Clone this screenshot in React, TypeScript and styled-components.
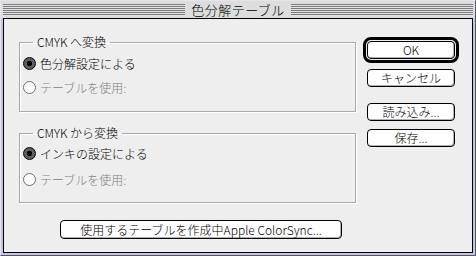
import React from "react";
import styled, { createGlobalStyle } from "styled-components";

const GlobalStyle = createGlobalStyle`
  html, body {
    margin: 0;
    padding: 0;
    background: #ffffff;
  }
  body {
    font-family: "Noto Sans CJK JP", "Liberation Sans", sans-serif;
    font-size: 12px;
    color: #000;
  }
`;

type RadioProps = {
  checked?: boolean;
  disabled?: boolean;
};

type ListProps = {
  gap: number;
  top: number;
};

const options = [
  {
    id: 1,
    title: "CMYK へ変換",
    gap: 8,
    top: 6,
    items: [
      { label: "色分解設定による", checked: true, disabled: false },
      { label: "テーブルを使用:", checked: false, disabled: true },
    ],
  },
  {
    id: 2,
    title: "CMYK から変換",
    gap: 10,
    top: 5,
    items: [
      { label: "インキの設定による", checked: true, disabled: false },
      { label: "テーブルを使用:", checked: false, disabled: true },
    ],
  },
];

const App: React.FC = () => {
  return (
    <>
      <GlobalStyle />
      <Window>
        <TitleBar>
          <Stripes />
          <Title>色分解テーブル</Title>
          <Stripes />
        </TitleBar>
        <Content>
          <LeftColumn>
            {options.map((group) => (
              <Group key={group.id}>
                <Legend>{group.title}</Legend>
                <RadioList gap={group.gap} top={group.top}>
                  {group.items.map((item) => (
                    <RadioRow key={item.label} disabled={item.disabled}>
                      <Radio checked={item.checked} disabled={item.disabled} />
                      {item.label}
                    </RadioRow>
                  ))}
                </RadioList>
              </Group>
            ))}
            <WideButton>使用するテーブルを作成中Apple ColorSync...</WideButton>
          </LeftColumn>
          <RightColumn>
            <DefaultRing>
              <Button>OK</Button>
            </DefaultRing>
            <Button>キャンセル</Button>
            <Spacer />
            <Button>読み込み...</Button>
            <Button>保存...</Button>
          </RightColumn>
        </Content>
      </Window>
    </>
  );
};

const Window = styled.div`
  width: 476px;
  height: 256px;
  box-sizing: border-box;
  display: flex;
  flex-direction: column;
  background: #c6c6dc;
  border-top: 1px solid #e4e4f0;
  border-left: 1px solid #e4e4f0;
  border-right: 1px solid #55556a;
  border-bottom: 1px solid #55556a;
  padding: 0 2px 2px 2px;
`;

const TitleBar = styled.div`
  height: 17px;
  display: flex;
  align-items: center;
  background: #dddddd;
  margin: 0 -2px;
  padding: 0 2px;
`;

const Stripes = styled.div`
  flex: 1;
  height: 12px;
  background: repeating-linear-gradient(
    to bottom,
    #7a7a7a 0px,
    #7a7a7a 1px,
    #e4e4e4 1px,
    #e4e4e4 2px
  );
`;

const Title = styled.div`
  padding: 0 6px;
  font-size: 13px;
  font-weight: 300;
  line-height: 17px;
  letter-spacing: 0.5px;
`;

const Content = styled.div`
  flex: 1;
  display: flex;
  background: #eeeeee;
  border: 1px solid #000;
  padding: 16px 0 0 15px;
`;

const LeftColumn = styled.div`
  width: 337px;
  display: flex;
  flex-direction: column;
`;

const Group = styled.fieldset`
  margin: 0 0 14px 0;
  padding: 0 0 0 3px;
  height: 77px;
  box-sizing: border-box;
  border: 1px solid #a8a8a8;
  box-shadow: 1px 1px 0 #ffffff, inset 1px 1px 0 #ffffff;
`;

const Legend = styled.legend`
  margin-left: 10px;
  padding: 0 4px;
  line-height: 14px;
  font-size: 12px;
  font-weight: 300;
`;

const RadioList = styled.div<ListProps>`
  display: flex;
  flex-direction: column;
  padding-top: ${(props) => props.top}px;
  gap: ${(props) => props.gap}px;
`;

const RadioRow = styled.div<RadioProps>`
  display: flex;
  align-items: center;
  gap: 4px;
  height: 16px;
  font-size: 12px;
  font-weight: 300;
  color: ${(props) => (props.disabled ? "#808080" : "#000")};
`;

const Radio = styled.span<RadioProps>`
  width: 13px;
  height: 13px;
  box-sizing: border-box;
  border-radius: 50%;
  border: 1px solid ${(props) => (props.disabled ? "#6e6e6e" : "#000")};
  background: ${(props) =>
    props.checked
      ? "radial-gradient(circle, #000 0, #000 2.5px, #5e5e5e 3px, #5e5e5e 5.5px)"
      : "#fff"};
`;

const WideButton = styled.button`
  align-self: flex-start;
  margin: 3px 0 0 41px;
  width: 282px;
  height: 19px;
  padding: 0;
  font-family: "Noto Sans CJK JP", "Liberation Sans", sans-serif;
  font-size: 12px;
  font-weight: 300;
  line-height: 17px;
  color: #000;
  background: #ffffff;
  border: 1px solid #000;
  border-radius: 4px;
  box-shadow: inset -1px -1px 0 #b0b0b0;
`;

const RightColumn = styled.div`
  margin: 2px 0 0 7px;
  width: 96px;
  display: flex;
  flex-direction: column;
  align-items: center;
  gap: 8px;
`;

const DefaultRing = styled.div`
  padding: 1px;
  border: 3px solid #000;
  border-radius: 8px;
  margin-bottom: -2px;
`;

const Spacer = styled.div`
  height: 0;
`;

const Button = styled.button`
  width: 88px;
  height: 18px;
  padding: 0;
  font-family: "Noto Sans CJK JP", "Liberation Sans", sans-serif;
  font-size: 12px;
  font-weight: 300;
  line-height: 16px;
  color: #000;
  background: #ffffff;
  border: 1px solid #000;
  border-radius: 4px;
  box-shadow: inset -1px -1px 0 #b0b0b0;
`;

export default App;
